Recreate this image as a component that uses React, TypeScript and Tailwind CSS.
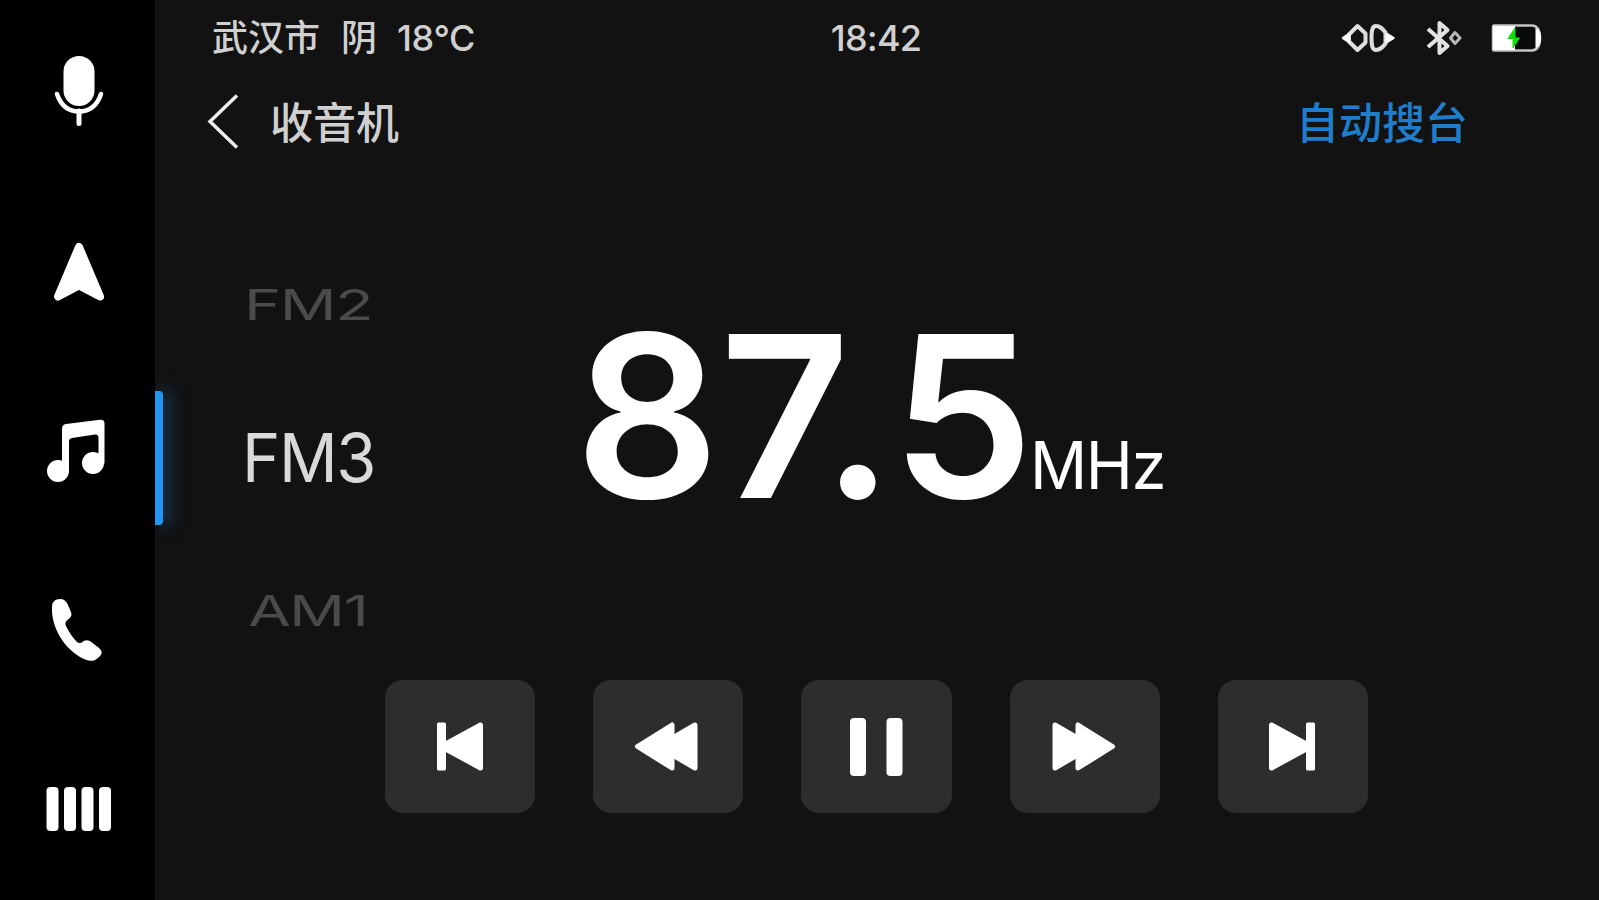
import React from 'react';

type IconProps = { className?: string };

const MicIcon: React.FC<IconProps> = ({ className }) => (
  <svg className={className} viewBox="0 0 50 74" fill="none">
    <rect x="9.5" y="2" width="31" height="50" rx="15.5" fill="white" />
    <path d="M3 40C7 52 15 57.5 25 57.5S43 52 47 40" stroke="white" strokeWidth="4.5" strokeLinecap="round" />
    <path d="M25 57V69.5" stroke="white" strokeWidth="5" strokeLinecap="round" />
  </svg>
);

const NavIcon: React.FC<IconProps> = ({ className }) => (
  <svg className={className} viewBox="0 0 52 60">
    <path
      d="M26 5L47 54.5L26 43.5L5 54.5Z"
      fill="white"
      stroke="white"
      strokeWidth="8"
      strokeLinejoin="round"
    />
  </svg>
);

const MusicIcon: React.FC<IconProps> = ({ className }) => (
  <svg className={className} viewBox="0 0 60 64" fill="white">
    <circle cx="12" cy="52" r="11" />
    <circle cx="47" cy="44" r="11" />
    <path d="M16 10Q16 5.5 20 5L54 .8Q58.5 .5 58.5 4.5V44.5H52.5V19Q52.5 15 49 15.5L26 19Q23 19.5 23 22.5V52.5H16Z" />
  </svg>
);

const PhoneIcon: React.FC<IconProps> = ({ className }) => (
  <svg className={className} viewBox="0 0 52 64" fill="white">
    <path d="M1 9C1 4 4 1 9 1C13 1 15 3 16.5 6L20 14C21.5 18 19 20 16.5 22C14 24 14 26 15.5 29C18.5 35 22 40 26 44C28 46 30 45 32 43.5C35 41.5 38 42 41 44.5L48 50C51.5 53 51.5 56 48 59C43 64 39 63.5 33 61C14 52 0 30 1 9Z" />
  </svg>
);

const BarsIcon: React.FC<IconProps> = ({ className }) => (
  <svg className={className} viewBox="0 0 66 46" fill="white">
    <rect x="0.5" y="1" width="12" height="44" rx="4" />
    <rect x="18" y="1" width="12" height="44" rx="4" />
    <rect x="35.5" y="1" width="12" height="44" rx="4" />
    <rect x="53" y="1" width="12" height="44" rx="4" />
  </svg>
);

const LinkIcon: React.FC<IconProps> = ({ className }) => (
  <svg className={className} viewBox="0 0 56 30" fill="none" stroke="#dedede" strokeWidth="4" strokeLinejoin="round">
    <path d="M17.5 3L25.5 10.5V19.5L17.5 27L9 18.5V11.5Z" />
    <path d="M36 3C40 3 42 5 45.5 9.5V20.5C42 25 40 27 36 27C32.5 27 31.5 23.5 31.5 15S32.5 3 36 3Z" />
    <path d="M9 11V19L3 15Z" fill="#ffffff" stroke="#ffffff" strokeWidth="2.5" />
    <path d="M47 11V19L53.5 15Z" fill="#ffffff" stroke="#ffffff" strokeWidth="2.5" />
  </svg>
);

const BluetoothIcon: React.FC<IconProps> = ({ className }) => (
  <svg className={className} viewBox="0 0 38 38" fill="none" stroke="#e2e2e2" strokeWidth="4" strokeLinejoin="round">
    <path d="M3 10L22.5 27L14.5 34V4L22.5 11L3 28" />
    <path d="M30 13.5L35 19L30 24.5L25.5 19Z" stroke="#b8b8b8" strokeWidth="3" />
  </svg>
);

const BatteryIcon: React.FC<IconProps> = ({ className }) => (
  <svg className={className} viewBox="0 0 52 30" fill="none">
    <path
      d="M4 2.5H42Q50 3 50 15T42 27.5H4Q3 27.5 3 26V4Q3 2.5 4 2.5Z"
      fill="#0a0a0a"
      stroke="#c4c4c4"
      strokeWidth="2.5"
    />
    <path d="M3 3H25V27H3Z" fill="white" />
    <path d="M45.5 5Q51 7 51 15T45.5 25Z" fill="white" />
    <path d="M25 5L18 15.5H23V25L29.5 15H25Z" fill="#0be00b" stroke="#0be00b" strokeLinejoin="round" />
  </svg>
);

const PrevIcon: React.FC<IconProps> = ({ className }) => (
  <svg className={className} viewBox="0 0 64 60" fill="white" stroke="white" strokeLinejoin="round">
    <rect x="10.5" y="7" width="6" height="45" strokeWidth="3" />
    <path d="M52.5 8V51L13 29.5Z" strokeWidth="5" />
  </svg>
);

const RewindIcon: React.FC<IconProps> = ({ className }) => (
  <svg className={className} viewBox="0 0 64 60" fill="white" stroke="white" strokeWidth="5" strokeLinejoin="round">
    <path d="M59 8V51L22 29.5Z" />
    <path d="M36 8V51L1.5 29.5Z" />
  </svg>
);

const PauseIcon: React.FC<IconProps> = ({ className }) => (
  <svg className={className} viewBox="0 0 64 60" fill="white">
    <rect x="6" y="1" width="16" height="58" rx="4" />
    <rect x="42.5" y="1" width="16" height="58" rx="4" />
  </svg>
);

const controls = [
  { label: '上一台', icon: <PrevIcon className="w-16 h-[60px] overflow-visible" /> },
  { label: '快退', icon: <RewindIcon className="w-16 h-[60px] overflow-visible" /> },
  { label: '暂停', icon: <PauseIcon className="w-16 h-[60px]" /> },
  { label: '快进', icon: <RewindIcon className="mr-[6px] w-16 h-[60px] overflow-visible -scale-x-100" /> },
  { label: '下一台', icon: <PrevIcon className="mr-[2px] w-16 h-[60px] overflow-visible -scale-x-100" /> },
];

const Sidebar: React.FC = () => (
  <nav className="flex w-[155px] shrink-0 flex-col items-center bg-black pt-[54px]">
    <MicIcon className="ml-[2px] h-[74px] w-[50px]" />
    <NavIcon className="mt-[114px] ml-[2px] h-[60px] w-[52px]" />
    <MusicIcon className="mt-[117px] mr-[4px] h-16 w-[60px]" />
    <PhoneIcon className="mt-[115px] mr-[2px] h-16 w-[52px]" />
    <BarsIcon className="mt-[124px] ml-[2px] h-[46px] w-[66px]" />
  </nav>
);

const StatusBar: React.FC = () => (
  <div className="flex h-[76px] items-center text-[36px] leading-none font-medium text-[#d0d0d0]">
    <div className="flex w-[620px] items-center pl-[57px]">
      <span>武汉市</span>
      <span className="ml-[21px]">阴</span>
      <span className="ml-[20px] tracking-[-0.4px]">18°C</span>
    </div>
    <span className="w-[202px] text-center tracking-[-0.8px]">18:42</span>
    <div className="flex flex-1 items-center justify-end pr-[57px]">
      <LinkIcon className="h-[30px] w-14" />
      <BluetoothIcon className="ml-[29px] h-[38px] w-[38px]" />
      <BatteryIcon className="ml-[27px] h-[30px] w-[52px]" />
    </div>
  </div>
);

export default function App() {
  return (
    <div className="flex h-[900px] w-[1599px] overflow-hidden bg-[#121212] font-['Inter','Noto_Sans_CJK_SC',sans-serif]">
      <Sidebar />

      <main className="relative flex flex-1 flex-col">
        {/* Active tab marker */}
        <div className="absolute top-[391px] left-0 h-[134px] w-2 rounded-r-[4px] bg-[#2196f3] shadow-[4px_0_18px_rgba(33,150,243,0.5)] [clip-path:inset(-30px_-40px_-30px_0)]" />

        <StatusBar />

        <header className="flex h-[92px] items-center pr-[131px] pl-[52px]">
          <svg className="h-14 w-8" viewBox="0 0 32 56" fill="none" stroke="#ededed" strokeWidth="3.5">
            <path d="M30 1.5L3 27.5L30 53.5" />
          </svg>
          <h1 className="ml-[31px] pt-[2px] text-[43px] leading-none font-medium text-[#d0d0d0]">收音机</h1>
          <button className="ml-auto pt-[2px] text-[43px] leading-none font-medium text-[#1e7ecb]">自动搜台</button>
        </header>

        <section className="flex h-[512px]">
          <ul className="flex w-[306px] flex-col items-center pt-[100px] text-[67px] leading-[74px] tracking-[-1.5px]">
            <li className="scale-x-[0.94] scale-y-[0.64] text-[#4a4a4a]">FM2</li>
            <li className="mt-[79px] scale-x-[0.97] text-[#d9d9d9]">FM3</li>
            <li className="mt-[79px] scale-x-[0.92] scale-y-[0.64] text-[#4a4a4a]">AM1</li>
          </ul>
          <div className="flex items-baseline pt-[135px] pl-[114px] text-white">
            <span className="text-[226px] leading-none font-semibold">87.5</span>
            <span className="relative -top-[9px] -left-[4px] origin-left scale-x-[0.96] text-[66px] leading-none tracking-[-1.5px]">
              MHz
            </span>
          </div>
        </section>

        <div className="flex gap-[58px] pl-[230px]">
          {controls.map((c) => (
            <button
              key={c.label}
              aria-label={c.label}
              className="flex h-[133px] w-[150.2px] items-center justify-center rounded-[18px] bg-[#2d2d2d]"
            >
              {c.icon}
            </button>
          ))}
        </div>
      </main>
    </div>
  );
}
